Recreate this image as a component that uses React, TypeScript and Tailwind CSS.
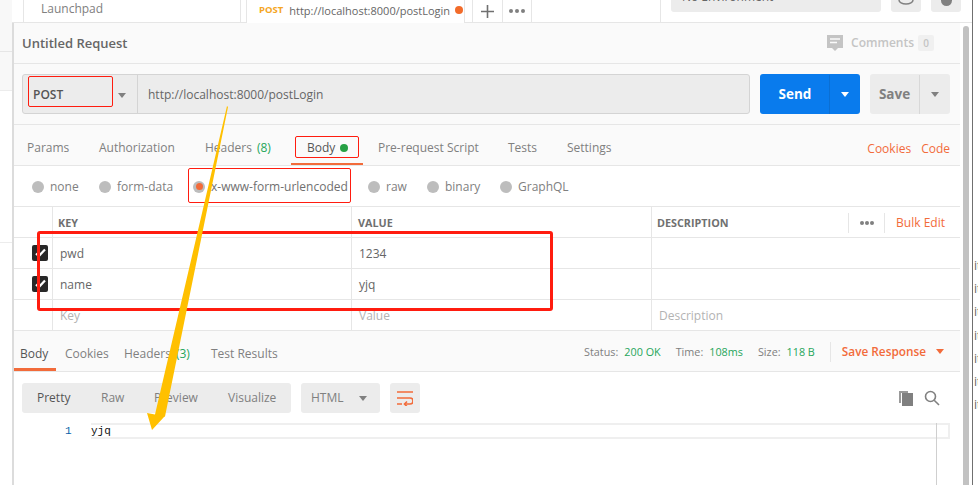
import React from "react";

const Caret = ({ c = "#808080" }: { c?: string }) => (
  <svg width="8" height="5" viewBox="0 0 8 5" className="block"><path d="M0 0h8L4 5z" fill={c} /></svg>
);
const Radio = ({ on }: { on?: boolean }) => (
  <span className="w-[12px] h-[12px] rounded-full bg-[#bdbdbd] flex items-center justify-center shrink-0">
    {on && <span className="w-[7px] h-[7px] rounded-full bg-[#f26b3a]" />}
  </span>
);
const Check = () => (
  <span className="w-[16px] h-[16px] rounded-[2px] bg-[#282828] flex items-center justify-center">
    <svg width="14" height="14" viewBox="0 0 14 14"><path d="M3 7.500l2.800 2.600L12 3.500" fill="none" stroke="#fff" strokeWidth="2.200" /></svg>
  </span>
);
const Row = ({ k, v, d, muted }: { k: string; v: string; d?: string; muted?: boolean }) => (
  <div className={`flex h-[31px] border-b border-[#e6e6e6] text-[12px] ${muted ? "text-[#b3b3b3]" : "text-[#666666]"}`}>
    <div className="w-[41px] border-r border-[#e6e6e6] flex items-center pl-[20px]">{!muted && <Check />}</div>
    <div className="w-[299px] border-r border-[#e6e6e6] flex items-center pl-[7px] pt-[1px]">{k}</div>
    <div className="w-[300px] border-r border-[#e6e6e6] flex items-center pl-[7px] pt-[1px]">{v}</div>
    <div className="flex-1 flex items-center pl-[7px] pt-[1px]">{d}</div>
  </div>
);
const Kv = ({ a, b }: { a: string; b: string }) => (
  <span className="flex gap-[6px] pt-[1px]"><span className="text-[#808080]">{a}</span><span className="text-[#26a65b]">{b}</span></span>
);

export default function App() {
  return (
    <div className="relative w-[978px] h-[485px] overflow-hidden bg-white flex text-[#666666] font-['Open_Sans',sans-serif] text-[12px] leading-none">
      {/* Sidebar sliver */}
      <div className="w-[12px] shrink-0 flex flex-col">
        <div className="h-[52px] bg-[#f8f8f8] border-b border-[#e6e6e6]" />
        <div className="h-[39px] bg-[#f8f8f8] border-b border-[#ececec]" />
        <div className="h-[152px] bg-white border-b border-[#ececec]" />
      </div>

      {/* Main */}
      <div className="w-[948px] shrink-0 flex flex-col">
        <div className="h-[23px] flex border-b border-[#e6e6e6] bg-white -mr-[12px] shrink-0">
          <div className="ml-[11px] w-[218px] border-x border-[#e6e6e6] pl-[17px] flex items-center text-[#808080] text-[12px] pb-[4px]">Launchpad</div>
          <div className="ml-[5px] w-[219px] border-l border-r border-[#e6e6e6] bg-white -mb-[1px] flex items-center pl-[12px] pb-[3px] whitespace-nowrap">
            <span className="text-[#f5a623] text-[9.5px] font-bold">POST</span>
            <span className="ml-[6px] text-[#666666] text-[11px]">http://localhost:8000/postLogin</span>
            <span className="ml-[5px] w-[8px] h-[8px] rounded-full bg-[#f26b2a]" />
          </div>
          <div className="ml-[7px] w-[31px] border-x border-[#e6e6e6] flex items-center justify-center">
            <svg width="13" height="13" viewBox="0 0 13 13"><path d="M6.500 0v13M0 6.500h13" stroke="#707070" strokeWidth="1.600" /></svg>
          </div>
          <div className="w-[29px] border-r border-[#e6e6e6] flex items-center justify-center gap-[2px]">
            {[0, 1, 2].map((i) => <span key={i} className="w-[4px] h-[4px] rounded-full bg-[#808080]" />)}
          </div>
          <div className="w-[129px] border-r border-[#e6e6e6]" />
          <div className="ml-[10px] w-[210px] h-[30px] -mt-[18px] rounded-[3px] bg-[#ececec] flex items-center pl-[11px] text-[#666666] text-[12px]">No Environment</div>
          <div className="ml-[10px] w-[30px] h-[30px] -mt-[18px] rounded-[3px] bg-[#ececec] flex items-end justify-center pb-[7px]">
            <svg width="16" height="10" viewBox="0 0 16 10"><ellipse cx="8" cy="5" rx="7" ry="4" fill="none" stroke="#808080" strokeWidth="1.500" /></svg>
          </div>
          <div className="ml-[10px] w-[30px] h-[30px] -mt-[18px] rounded-[3px] bg-[#ececec] flex items-end justify-center pb-[6px]">
            <span className="w-[11px] h-[11px] rounded-full bg-[#808080]" />
          </div>
        </div>

        <div className="h-[41px] bg-[#fafafa] border-b border-[#e6e6e6] flex items-center pl-[10px] shrink-0">
          <span className="text-[13px] font-semibold text-[#666666]">Untitled Request</span>
          <div className="ml-auto mr-[26px] flex items-center text-[#c4c4c4] text-[12px] font-semibold">
            <svg width="16" height="16" viewBox="0 0 16 16" className="mr-[8px]">
              <path d="M0 0h16v13h-5l-3 3-3-3H0z" fill="#c4c4c4" />
              <path d="M3 4h10M3 7.500h7" stroke="#fafafa" strokeWidth="1.600" />
            </svg>
            Comments
            <span className="ml-[4px] w-[16px] h-[16px] bg-[#f0f0f0] rounded-[2px] flex items-center justify-center text-[10px]">0</span>
          </div>
        </div>

        <div className="h-[61px] bg-[#fafafa] border-b border-[#e6e6e6] flex items-center pl-[10px] pr-[10px] shrink-0">
          <div className="flex h-[40px] w-[728px] bg-[#ececec] border border-[#d4d4d4] rounded-[3px]">
            <div className="w-[115px] border-r border-[#d4d4d4] flex items-center pl-[10px] pr-[11px] pt-[2px] justify-between text-[#555555]">
              <span className="font-semibold text-[12px]">POST</span><Caret />
            </div>
            <div className="flex-1 flex items-center pl-[10px] pt-[1px] text-[#666666] text-[12px]">http://localhost:8000/postLogin</div>
          </div>
          <div className="ml-[10px] w-[100px] h-[40px] bg-[#097bed] rounded-[3px] flex text-white pt-[1px]">
            <div className="w-[69px] flex items-center justify-center font-bold text-[13.5px] pl-[1px] pt-[1px]">Send</div>
            <div className="flex-1 border-l border-[#0a6fd4] flex items-center justify-center"><Caret c="#ffffff" /></div>
          </div>
          <div className="ml-[10px] w-[80px] h-[40px] bg-[#ececec] rounded-[3px] flex text-[#808080] pt-[1px]">
            <div className="w-[49px] flex items-center justify-center font-bold text-[13.5px] pt-[1px]">Save</div>
            <div className="flex-1 border-l border-[#d8d8d8] flex items-center justify-center"><Caret /></div>
          </div>
        </div>

        <div className="h-[41px] bg-[#fafafa] border-b border-[#e6e6e6] flex items-center text-[#808080] text-[12px] shrink-0 pl-[15px] pr-[10px] pt-[6px]">
          <span className="w-[72px]">Params</span>
          <span className="w-[106px]">Authorization</span>
          <span className="w-[102px] flex gap-[5px]">Headers <span className="text-[#26a65b]">(8)</span></span>
          <span className="relative w-[71px] flex items-center text-[#555555] h-full">
            Body<span className="ml-[5px] w-[8px] h-[8px] rounded-full bg-[#26a044]" />
            <span className="absolute left-[-16px] w-[72px] bottom-0 h-[2px] bg-[#f26b3a]" />
          </span>
          <span className="w-[130px]">Pre-request Script</span>
          <span className="w-[59px]">Tests</span>
          <span>Settings</span>
          <span className="ml-auto text-[#f26b3a] pt-[1px]">Cookies</span>
          <span className="ml-[10px] text-[#f26b3a] pt-[1px]">Code</span>
        </div>

        <div className="h-[41px] bg-white border-b border-[#e6e6e6] flex items-center text-[#808080] shrink-0 pl-[20px] pt-[1px]">
          <div className="w-[67px] flex items-center gap-[6px]"><Radio />none</div>
          <div className="w-[94px] flex items-center gap-[6px]"><Radio />form-data</div>
          <div className="w-[175px] flex items-center gap-[6px] text-[#707070]"><Radio on />x-www-form-urlencoded</div>
          <div className="w-[59px] flex items-center gap-[6px]"><Radio />raw</div>
          <div className="w-[73px] flex items-center gap-[6px]"><Radio />binary</div>
          <div className="flex items-center gap-[6px]"><Radio />GraphQL</div>
        </div>

        <div className="flex h-[31px] border-b border-[#e6e6e6] text-[10.800px] font-bold text-[#707070] shrink-0">
          <div className="w-[41px] border-r border-[#e6e6e6]" />
          <div className="w-[299px] border-r border-[#e6e6e6] flex items-center pl-[5px] pt-[2px]">KEY</div>
          <div className="w-[300px] border-r border-[#e6e6e6] flex items-center pl-[6px] pt-[2px]">VALUE</div>
          <div className="flex-1 flex items-center pl-[5px] pt-[2px]">
            DESCRIPTION
            <div className="ml-auto flex items-center h-[20px]">
              <div className="w-[37px] h-[20px] border-x border-[#e6e6e6] flex items-center justify-center gap-[1px]">
                {[0, 1, 2].map((i) => <span key={i} className="w-[4px] h-[4px] rounded-full bg-[#808080]" />)}
              </div>
              <span className="ml-[11px] mr-[15px] text-[12px] font-normal text-[#f26b3a]">Bulk Edit</span>
            </div>
          </div>
        </div>
        <Row k="pwd" v="1234" />
        <Row k="name" v="yjq" />
        <Row k="Key" v="Value" d="Description" muted />

        <div className="h-[41px] bg-[#fafafa] border-b border-[#e6e6e6] flex items-center text-[#808080] shrink-0 pr-[16px]">
          <span className="relative w-[53px] h-full flex items-center pl-[8px] pt-[5px] text-[#555555]">
            Body<span className="absolute left-0 w-[44px] bottom-0 h-[3px] bg-[#f26b3a]" />
          </span>
          <span className="w-[59px] pt-[5px]">Cookies</span>
          <span className="w-[87px] flex gap-[5px] pt-[5px]">Headers <span className="text-[#26a65b]">(3)</span></span>
          <span className="pt-[5px]">Test Results</span>
          <div className="ml-auto flex items-center text-[10.800px] gap-[15px] pt-[1px]">
            <Kv a="Status:" b="200 OK" />
            <Kv a="Time:" b="108ms" />
            <Kv a="Size:" b="118 B" />
            <div className="h-[20px] border-l border-[#e6e6e6] flex items-center pl-[11px] gap-[10px] text-[#f26b3a] font-semibold text-[11.800px]">
              Save Response <Caret c="#f26b3a" />
            </div>
          </div>
        </div>

        <div className="flex-1 bg-white flex flex-col pl-[10px] pr-[10px]">
          <div className="mt-[11px] flex items-center h-[30px]">
            <div className="w-[269px] h-[30px] rounded-[3px] bg-[#ececec] flex items-center text-[12px] text-[#808080] pl-[15px]">
              <span className="w-[64px] text-[#555555]">Pretty</span>
              <span className="w-[53px]">Raw</span>
              <span className="w-[74px]">Preview</span>
              <span>Visualize</span>
            </div>
            <div className="ml-[10px] w-[79px] h-[30px] rounded-[3px] bg-[#ececec] flex items-center justify-between pl-[10px] pr-[13px] text-[#808080]">HTML<Caret /></div>
            <div className="ml-[10px] w-[30px] h-[30px] rounded-[3px] bg-[#ececec] flex items-center justify-center">
              <svg width="16" height="16" viewBox="0 0 16 16" fill="none" stroke="#f26b3a" strokeWidth="1.600">
                <path d="M0 2h16M0 8h13a2.600 2.600 0 0 1 0 6H8M0 14h5" />
                <path d="M10 11.500L7.500 14l2.500 2.500" />
              </svg>
            </div>
            <svg width="16" height="16" viewBox="0 0 16 16" className="ml-auto mr-[10px]">
              <path d="M1 1h9v2H3v10H1z" fill="#9a9a9a" /><rect x="4" y="3" width="11" height="13" fill="#808080" />
            </svg>
            <svg width="16" height="16" viewBox="0 0 16 16" fill="none" stroke="#808080" strokeWidth="1.600" className="mr-[10px]">
              <circle cx="6.500" cy="6.500" r="5" /><path d="M10.200 10.200L15 15" />
            </svg>
          </div>
          <div className="mt-[10px] h-[16px] border-y-[2px] border-[#efefef] border-r-[2px] flex items-center font-['Liberation_Mono',monospace] text-[11px] text-[#111111] relative ml-[69px]">
            <span className="absolute left-[-26px] text-[#0a5fa8]">1</span>
            <span className="absolute left-0 top-[1px]">yjq</span>
          </div>
        </div>
      </div>

      {/* Scrollbar */}
      <div className="w-[12px] shrink-0 pt-[26px] pl-[3px]">
        <div className="w-[6px] h-[459px] bg-[#c2c2c2] rounded-t-[3px]" />
      </div>

      {/* Next window sliver */}
      <div className="flex-1 border-l border-[#707070] pl-[1px] pt-[260px] flex flex-col gap-[10.200px] text-[12px] text-[#666666] overflow-hidden bg-white">
        {[0, 1, 2, 3, 4, 5, 6].map((i) => <span key={i} className="h-[13px]">it</span>)}
      </div>

      {/* Annotations */}
      <div className="absolute left-[12px] top-[23px] bottom-0 w-[2px] bg-[#dcdcdc]" />
      <div className="absolute left-[936px] top-[423px] bottom-0 w-px bg-[#cfcfcf]" />
      <div className="absolute left-[28px] top-[76px] w-[85px] h-[31px] border border-[#ff1c0f] rounded-[2px]" />
      <div className="absolute left-[295px] top-[136px] w-[64px] h-[22px] border border-[#ff1c0f] rounded-[2px]" />
      <div className="absolute left-[188px] top-[168px] w-[163px] h-[35px] border border-[#ff1c0f] rounded-[2px]" />
      <div className="absolute left-[37px] top-[231px] w-[516px] h-[80px] border-[3px] border-[#ff1c0f] rounded-[3px]" />
      <svg className="absolute left-0 top-0 pointer-events-none" width="978" height="485">
        <path d="M227 106L228 107L165 416.500L164 417L152 430L147 413L155 414.500Z" fill="#ffc000" />
      </svg>
    </div>
  );
}
